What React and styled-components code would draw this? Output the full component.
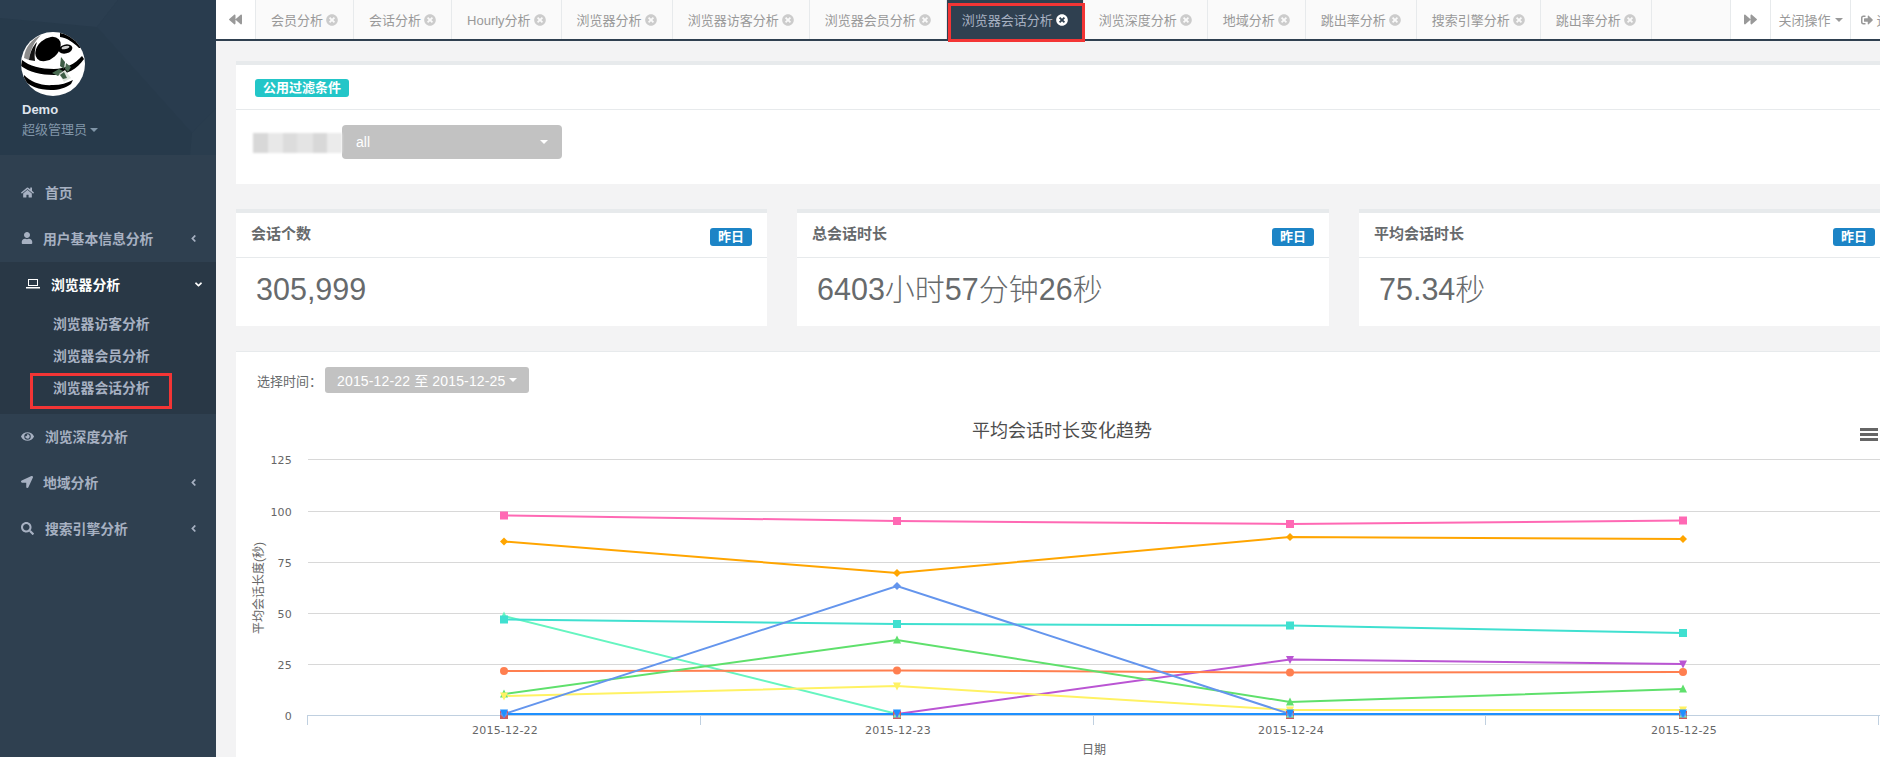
import styled, {createGlobalStyle} from 'styled-components'
import {
  FaAngleDown,
  FaAngleLeft,
  FaBackward,
  FaEye,
  FaForward,
  FaHome,
  FaLocationArrow,
  FaSearch,
  FaSignOutAlt,
  FaTimesCircle,
  FaUser,
} from 'react-icons/fa'

const FONT = '"Liberation Sans", "Noto Sans CJK SC", sans-serif'

const GlobalStyle = createGlobalStyle`
  html, body {
    margin: 0;
    height: 757px;
    overflow: hidden;
  }

  body {
    font-family: ${FONT};
    color: #676a6c;
    background: #f3f3f4;
  }

  *, *::after {
    box-sizing: border-box;
  }
`

const Page = styled.div`
  display: flex;
  width: 1880px;
  height: 757px;
  overflow: hidden;
`

/* sidebar */

const Sidebar = styled.aside`
  flex: 0 0 216px;
  background: #2f4050;
`

const Profile = styled.div`
  position: relative;
  height: 155px;
  padding: 32px 0 0 21px;
  background: #273a4b;
  overflow: hidden;
`

const ProfileBackdrop = styled.svg`
  position: absolute;
  top: 0;
  left: 0;
`

const Avatar = styled.svg`
  position: relative;
  display: block;
  width: 64px;
  height: 64px;
`

const ProfileName = styled.div`
  position: relative;
  margin: 6px 0 0 1px;
  font-size: 13px;
  line-height: 16px;
  font-weight: bold;
  color: #dfe4ed;
`

const ProfileRole = styled.div`
  position: relative;
  display: flex;
  align-items: center;
  margin: 3px 0 0 1px;
  font-size: 13px;
  line-height: 17px;
  color: #8095a8;
`

const Caret = styled.span`
  display: inline-block;
  flex: none;
  margin-left: ${(p) => p.$gap || 3}px;
  border-top: 4px solid currentColor;
  border-left: 4px solid transparent;
  border-right: 4px solid transparent;
`

const Menu = styled.nav`
  padding-top: 15px;
`

const MenuGroup = styled.div`
  background: ${(p) => (p.$open ? '#293846' : 'transparent')};
  padding-bottom: ${(p) => (p.$open ? '10px' : '0')};
`

const MenuItem = styled.div`
  display: flex;
  align-items: center;
  height: 46px;
  padding: 0 ${(p) => (p.$open ? '12px' : '17px')} 2px ${(p) => (p.$open ? '26px' : '21px')};
  font-size: 13.8px;
  font-weight: bold;
  color: ${(p) => (p.$open ? '#fff' : '#a7b1c2')};
`

const MenuIcon = styled.span`
  display: flex;
  flex: 0 0 ${(p) => p.$width}px;
  font-size: ${(p) => p.$size || 13}px;
`

const MenuLabel = styled.span`
  flex: 1;
`

const SubItem = styled.div`
  position: relative;
  height: 32px;
  padding-left: 53px;
  font-size: 13.8px;
  line-height: 34px;
  font-weight: bold;
  color: #a7b1c2;

  ${(p) =>
    p.$marked &&
    `
    &::after {
      content: '';
      position: absolute;
      top: 1px;
      left: 30px;
      width: 142px;
      height: 36px;
      border: 3px solid #f33535;
    }
  `}
`

/* tab strip */

const Main = styled.main`
  flex: 1;
  min-width: 0;
`

const TabStrip = styled.div`
  display: flex;
  height: 41px;
  background: #fafafa;
  border-bottom: 2px solid #2f4050;
`

const TabTool = styled.div`
  display: flex;
  flex: 0 0 ${(p) => p.$width}px;
  min-width: 0;
  align-items: center;
  justify-content: ${(p) => (p.$start ? 'flex-start' : 'center')};
  padding-left: ${(p) => (p.$start ? '10px' : '0')};
  background: #fff;
  border-${(p) => p.$side || 'left'}: 1px solid #e7eaec;
  color: #999;
  font-size: 13px;
  white-space: nowrap;

  svg {
    flex: none;
  }
`

const Tab = styled.div`
  position: relative;
  display: flex;
  flex: 0 0 auto;
  align-items: center;
  gap: 3px;
  padding: 0 15px;
  background: ${(p) => (p.$active ? '#2f4050' : 'transparent')};
  border-right: 1px solid #e7eaec;
  color: ${(p) => (p.$active ? '#a7b1c2' : '#999')};
  font-size: 13px;

  svg {
    font-size: 12px;
    color: ${(p) => (p.$active ? '#fff' : '#ccc')};
  }

  ${(p) =>
    p.$active &&
    `
    &::after {
      content: '';
      position: absolute;
      top: 3px;
      left: 1px;
      right: -2px;
      height: 39px;
      border: 3px solid #f33535;
    }
  `}
`

const TabSpacer = styled.div`
  flex: 1;
`

/* content */

const Content = styled.div`
  display: flex;
  flex-direction: column;
  gap: 25px;
  width: 1654px;
  margin: 20px 0 0 20px;
`

const FilterCard = styled.section`
  background: #fff;
  border-top: 4px solid #e7eaec;
`

const FilterHeader = styled.div`
  display: flex;
  align-items: flex-start;
  height: 45px;
  padding: 14px 0 0 19px;
  border-bottom: 1px solid #e7eaec;
`

const FilterBadge = styled.span`
  height: 18px;
  padding: 0 8px;
  border-radius: 3px;
  background: #23c6c8;
  color: #fff;
  font-size: 13px;
  line-height: 18px;
  font-weight: bold;
`

const FilterBody = styled.div`
  display: flex;
  align-items: flex-start;
  height: 74px;
  padding: 15px 0 0 17px;
`

const BlurredLabel = styled.div`
  flex: 0 0 89px;
  height: 20px;
  margin-top: 8px;
  filter: blur(1px);
  background: linear-gradient(
    to right,
    #d8d8d8 0 15px,
    #e8e8e8 15px 30px,
    #dcdcdc 30px 44px,
    #e4e4e4 44px 60px,
    #d8d8d8 60px 74px,
    #ebebeb 74px 89px
  );
`

const SelectBox = styled.div`
  display: flex;
  align-items: center;
  justify-content: space-between;
  width: 220px;
  height: 34px;
  padding: 0 14px;
  border-radius: 4px;
  background: #c2c2c2;
  color: #fff;
  font-size: 14px;
`

const StatRow = styled.div`
  display: grid;
  grid-template-columns: 531px 532px 531px;
  gap: 30px;
`

const StatCard = styled.section`
  height: 117px;
  background: #fff;
  border-top: 4px solid #e7eaec;
`

const StatHeader = styled.div`
  display: flex;
  align-items: center;
  justify-content: space-between;
  height: 45px;
  padding: 0 15px 5px 15px;
  border-bottom: 1px solid #e7eaec;
  font-size: 15px;
  font-weight: bold;
`

const DayBadge = styled.span`
  width: 42px;
  height: 18px;
  margin-top: 8px;
  border-radius: 3px;
  background: #1c84c6;
  color: #fff;
  font-size: 13px;
  line-height: 18px;
  text-align: center;
`

const StatValue = styled.div`
  padding: 10px 0 0 20px;
  font-size: 30.5px;
  line-height: 42px;
`

const StatUnit = styled.span`
  font-size: 30px;
  font-weight: 300;
`

const ChartCard = styled.section`
  flex: 1;
  height: 406px;
  background: #fff;
  border-top: 1px solid #e7eaec;
`

const ChartToolbar = styled.div`
  display: flex;
  align-items: center;
  gap: 3px;
  height: 26px;
  margin: 15px 0 7px 21px;
  font-size: 13px;
`

const RangeButton = styled.div`
  display: flex;
  align-items: center;
  height: 26px;
  padding: 0 12px;
  border-radius: 3px;
  background: #c2c2c2;
  color: #fff;
  font-size: 14px;
  letter-spacing: 0.15px;
`

const ChartSvg = styled.svg`
  display: block;
`

const TickText = styled.text`
  font-family: "DejaVu Sans", sans-serif;
  font-size: 11px;
  letter-spacing: 0.2px;
  fill: #666;
`

const TitleText = styled.text`
  font-family: ${FONT};
  font-size: 18px;
  fill: #4d4d4d;
`

const AxisTitle = styled.text`
  font-family: ${FONT};
  font-size: 12px;
  fill: #666;
`

const tabs = [
  '会员分析',
  '会话分析',
  'Hourly分析',
  '浏览器分析',
  '浏览器访客分析',
  '浏览器会员分析',
  '浏览器会话分析',
  '浏览深度分析',
  '地域分析',
  '跳出率分析',
  '搜索引擎分析',
  '跳出率分析',
]

const gridLines = [
  {label: '125', y: 459.5},
  {label: '100', y: 511.5},
  {label: '75', y: 562.5},
  {label: '50', y: 613.5},
  {label: '25', y: 664.5},
]

const categories = [
  {label: '2015-12-22', x: 504},
  {label: '2015-12-23', x: 897},
  {label: '2015-12-24', x: 1290},
  {label: '2015-12-25', x: 1683},
]

const axisTicks = [307.5, 700.5, 1093.5, 1485.5, 1878.5]

const series = [
  {color: '#cd5c5c', symbol: 'square', y: [714, 714, 714, 714], shift: 1},
  {color: '#66f5c0', symbol: 'triangle', y: [616, 714, 714, 714]},
  {color: '#ff69b4', symbol: 'square', y: [515.5, 521, 524, 520.5]},
  {color: '#ffa500', symbol: 'diamond', y: [541.5, 573, 537, 539]},
  {color: '#40e0d0', symbol: 'square', y: [619.5, 624, 625.5, 633]},
  {color: '#ba55d3', symbol: 'triangleDown', y: [714, 714, 659.5, 664]},
  {color: '#ff7f50', symbol: 'circle', y: [671, 670.5, 672.5, 672]},
  {color: '#5fe06c', symbol: 'triangle', y: [694, 640, 702, 689]},
  {color: '#fff263', symbol: 'triangleDown', y: [696, 686, 710, 710]},
  {color: '#6495ed', symbol: 'diamond', y: [714, 586, 714, 714]},
  {color: '#1e90ff', symbol: 'triangleDown', y: [714, 714, 714, 714], shift: -1},
]

const Marker = ({symbol, x, y, color}) => {
  if (symbol === 'circle') return <circle cx={x} cy={y} r={4} fill={color} />
  if (symbol === 'square') return <rect x={x - 4} y={y - 4} width={8} height={8} fill={color} />
  const points = {
    diamond: `${x},${y - 4} ${x + 4},${y} ${x},${y + 4} ${x - 4},${y}`,
    triangle: `${x},${y - 4.5} ${x + 4},${y + 3.5} ${x - 4},${y + 3.5}`,
    triangleDown: `${x - 4},${y - 3.5} ${x + 4},${y - 3.5} ${x},${y + 4.5}`,
  }
  return <polygon points={points[symbol]} fill={color} />
}

const Chart = () => (
  <ChartSvg width={1644} height={357} viewBox="236 400 1644 357">
    <TitleText x={1062} y={437} textAnchor="middle">平均会话时长变化趋势</TitleText>
    <g fill="#666">
      <rect x={1860} y={428} width={18} height={3} />
      <rect x={1860} y={433} width={18} height={3} />
      <rect x={1860} y={438} width={18} height={3} />
    </g>
    {gridLines.map((line) => (
      <g key={line.label}>
        <line x1={308} x2={1880} y1={line.y} y2={line.y} stroke="#d8d8d8" />
        <TickText x={292} y={line.y + 4} textAnchor="end">{line.label}</TickText>
      </g>
    ))}
    <line x1={307} x2={1880} y1={715.5} y2={715.5} stroke="#c0d0e0" />
    <TickText x={292} y={719.5} textAnchor="end">0</TickText>
    {axisTicks.map((x) => (
      <line key={x} x1={x} x2={x} y1={715} y2={725} stroke="#c0d0e0" />
    ))}
    {categories.map((item) => (
      <TickText key={item.x} x={item.x + 1} y={734} textAnchor="middle">{item.label}</TickText>
    ))}
    <AxisTitle x={1094} y={754} textAnchor="middle">日期</AxisTitle>
    <AxisTitle transform="translate(263 588) rotate(-90)" textAnchor="middle">平均会话长度(秒)</AxisTitle>
    {series.map((item) => (
      <polyline
        key={item.color}
        points={item.y.map((y, i) => `${categories[i].x},${y}`).join(' ')}
        fill="none"
        stroke={item.color}
        strokeWidth={2}
      />
    ))}
    {series.map((item) =>
      item.y.map((y, i) => (
        <Marker
          key={item.color + i}
          symbol={item.symbol}
          x={categories[i].x}
          y={y + (item.shift || 0)}
          color={item.color}
        />
      )),
    )}
  </ChartSvg>
)

const LaptopIcon = () => (
  <svg width="14" height="12" viewBox="0 0 14 12" fill="currentColor">
    <path d="M2 1H12V8H2ZM3 2V7H11V2Z" fillRule="evenodd" />
    <rect x="0" y="9" width="14" height="1.5" />
  </svg>
)

const PandaAvatar = () => (
  <Avatar viewBox="0 0 64 64">
    <defs>
      <clipPath id="avatarClip">
        <circle cx="32" cy="32" r="32" />
      </clipPath>
    </defs>
    <g clipPath="url(#avatarClip)">
      <rect width="64" height="64" fill="#fff" />
      <path d="M3 26C4 15 11 7 20 3C13 10 9 18 8 28Z" fill="#8c8c8c" />
      <path d="M8 28C9 20 12 14 16 10C14 16 13 22 14 29Z" fill="#111" />
      <ellipse cx="27" cy="17" rx="14.5" ry="10" transform="rotate(-42 27 17)" fill="#000" />
      <ellipse cx="44.5" cy="17" rx="7" ry="4.5" transform="rotate(-14 44.5 17)" fill="#000" />
      <ellipse cx="44.5" cy="15.5" rx="4" ry="1.5" transform="rotate(-14 44.5 15.5)" fill="#cfcfcf" />
      <path d="M39 1C48 2 56 8 62 16L58 16C52 10 46 6 39 5Z" fill="#000" />
      <path d="M1 28C8 34 20 37 33 37C44 37 54 32 61 24L63 27C56 37 46 43 33 43C20 43 8 40 0 34Z" fill="#000" />
      <path d="M3 43C10 50 20 54 32 53C40 53 46 51 52 48L50 52C44 56 38 58 30 58C18 58 8 54 3 48Z" fill="#000" />
      <path d="M40 25L44 30L43 37L39 34Z" fill="#3d5c45" />
      <path d="M31 41L38 37L42 39L37 44Z" fill="#4a6b52" />
      <path d="M38 42L44 38L50 46L43 50Z" fill="#dfe5df" />
      <path d="M39 43L43 40L46 46L42 47Z" fill="#3d5c45" />
      <path d="M45 31L50 35L47 40L44 37Z" fill="#4a6b52" />
    </g>
  </Avatar>
)

const App = () => {
  return (
    <Page>
      <GlobalStyle />
      <Sidebar>
        <Profile>
          <ProfileBackdrop width="216" height="155">
            <polygon points="0,0 118,0 97,27 0,18" fill="#2b3e50" />
            <polygon points="97,27 118,0 216,0 216,108 192,133" fill="#293c4e" />
            <polygon points="192,133 216,108 216,155 190,155" fill="#2a3d4e" />
          </ProfileBackdrop>
          <PandaAvatar />
          <ProfileName>Demo</ProfileName>
          <ProfileRole>超级管理员<Caret /></ProfileRole>
        </Profile>
        <Menu>
          <MenuItem>
            <MenuIcon $width={24}><FaHome /></MenuIcon>
            <MenuLabel>首页</MenuLabel>
          </MenuItem>
          <MenuItem>
            <MenuIcon $width={22} $size={12}><FaUser /></MenuIcon>
            <MenuLabel>用户基本信息分析</MenuLabel>
            <FaAngleLeft size={11} />
          </MenuItem>
          <MenuGroup $open>
            <MenuItem $open>
              <MenuIcon $width={25}><LaptopIcon /></MenuIcon>
              <MenuLabel>浏览器分析</MenuLabel>
              <FaAngleDown size={11} />
            </MenuItem>
            <SubItem>浏览器访客分析</SubItem>
            <SubItem>浏览器会员分析</SubItem>
            <SubItem $marked>浏览器会话分析</SubItem>
          </MenuGroup>
          <MenuItem>
            <MenuIcon $width={24}><FaEye /></MenuIcon>
            <MenuLabel>浏览深度分析</MenuLabel>
          </MenuItem>
          <MenuItem>
            <MenuIcon $width={22} $size={12}><FaLocationArrow /></MenuIcon>
            <MenuLabel>地域分析</MenuLabel>
            <FaAngleLeft size={11} />
          </MenuItem>
          <MenuItem>
            <MenuIcon $width={24}><FaSearch /></MenuIcon>
            <MenuLabel>搜索引擎分析</MenuLabel>
            <FaAngleLeft size={11} />
          </MenuItem>
        </Menu>
      </Sidebar>
      <Main>
        <TabStrip>
          <TabTool $width={40} $side="right"><FaBackward size={13} /></TabTool>
          {tabs.map((tab, i) => (
            <Tab key={i} $active={i === 6}>
              {tab}
              <FaTimesCircle />
            </Tab>
          ))}
          <TabSpacer />
          <TabTool $width={40}><FaForward size={13} /></TabTool>
          <TabTool $width={80}>关闭操作<Caret $gap={4} /></TabTool>
          <TabTool $width={30} $start><FaSignOutAlt size={12} /><span>&nbsp;退出</span></TabTool>
        </TabStrip>
        <Content>
          <FilterCard>
            <FilterHeader>
              <FilterBadge>公用过滤条件</FilterBadge>
            </FilterHeader>
            <FilterBody>
              <BlurredLabel />
              <SelectBox>
                all
                <Caret />
              </SelectBox>
            </FilterBody>
          </FilterCard>
          <StatRow>
            <StatCard>
              <StatHeader>
                会话个数
                <DayBadge>昨日</DayBadge>
              </StatHeader>
              <StatValue>305,999</StatValue>
            </StatCard>
            <StatCard>
              <StatHeader>
                总会话时长
                <DayBadge>昨日</DayBadge>
              </StatHeader>
              <StatValue>
                6403<StatUnit>小时</StatUnit>57<StatUnit>分钟</StatUnit>26<StatUnit>秒</StatUnit>
              </StatValue>
            </StatCard>
            <StatCard>
              <StatHeader>
                平均会话时长
                <DayBadge>昨日</DayBadge>
              </StatHeader>
              <StatValue>
                75.34<StatUnit>秒</StatUnit>
              </StatValue>
            </StatCard>
          </StatRow>
          <ChartCard>
            <ChartToolbar>
              选择时间：
              <RangeButton>
                2015-12-22 至 2015-12-25
                <Caret $gap={4} />
              </RangeButton>
            </ChartToolbar>
            <Chart />
          </ChartCard>
        </Content>
      </Main>
    </Page>
  )
}

export default App
